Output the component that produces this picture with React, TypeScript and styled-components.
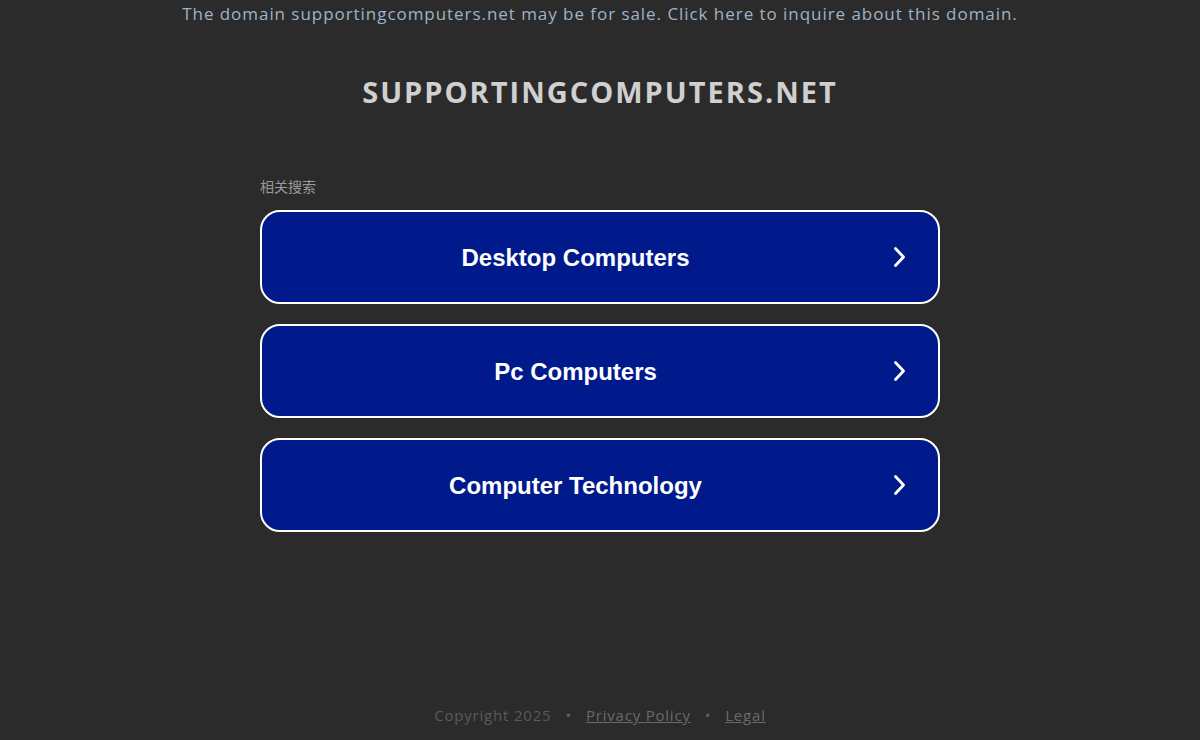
import styled, { createGlobalStyle } from "styled-components";

const GlobalStyle = createGlobalStyle`
  html, body {
    margin: 0;
    padding: 0;
    background: #2b2b2b;
  }
  body {
    font-family: "Open Sans", "Noto Sans", sans-serif;
  }
`;

const links = ["Desktop Computers", "Pc Computers", "Computer Technology"];

const Page = styled.div`
  height: 740px;
  display: flex;
  flex-direction: column;
  align-items: center;
  overflow: hidden;
`;

const Banner = styled.a`
  margin-top: 3px;
  font-size: 17px;
  line-height: 22px;
  color: #9fb3c8;
  text-decoration: none;
  letter-spacing: 0.95px;
`;

const Domain = styled.h1`
  margin: 49px 0 0;
  font-size: 29px;
  line-height: 36px;
  font-weight: 700;
  color: #d0d0d0;
  letter-spacing: 2px;
`;

const Related = styled.div`
  width: 680px;
  margin-top: 67px;
  display: flex;
  flex-direction: column;
`;

const Label = styled.div`
  font-family: "Noto Sans CJK SC", sans-serif;
  font-size: 14px;
  line-height: 18px;
  color: #9a9a9a;
  margin-bottom: 15px;
`;

const List = styled.div`
  display: flex;
  flex-direction: column;
  gap: 20px;
`;

const Item = styled.a`
  box-sizing: border-box;
  height: 94px;
  border: 2px solid #ffffff;
  border-radius: 20px;
  background: #011a8b;
  display: flex;
  align-items: center;
  padding: 0 30px 0 0;
  text-decoration: none;
`;

const ItemText = styled.span`
  flex: 1;
  text-align: center;
  font-family: "Liberation Sans", Arial, sans-serif;
  font-weight: 700;
  font-size: 24px;
  color: #ffffff;
  padding-top: 2px;
`;

const Chevron = styled.svg`
  width: 16px;
  height: 24px;
  margin-left: 3px;
`;

const Footer = styled.div`
  margin-top: auto;
  margin-bottom: 15px;
  display: flex;
  align-items: center;
  gap: 14px;
  font-size: 15px;
  line-height: 20px;
  letter-spacing: 0.8px;
  color: #5a5a5a;
`;

const FooterLink = styled.a`
  color: #6a6a6a;
  text-decoration: underline;
`;

const Dot = styled.span`
  color: #5f5f5f;
`;

export default function App() {
  return (
    <>
      <GlobalStyle />
      <Page>
        <Banner href="#">
          The domain supportingcomputers.net may be for sale. Click here to inquire about this domain.
        </Banner>
        <Domain>SUPPORTINGCOMPUTERS.NET</Domain>
        <Related>
          <Label>相关搜索</Label>
          <List>
            {links.map((l) => (
              <Item href="#" key={l}>
                <ItemText>{l}</ItemText>
                <Chevron viewBox="0 0 16 24">
                  <path
                    d="M3.5 3.5 L11.5 12 L3.5 20.5"
                    fill="none"
                    stroke="#fff"
                    strokeWidth="2.8"
                    strokeLinecap="round"
                    strokeLinejoin="round"
                  />
                </Chevron>
              </Item>
            ))}
          </List>
        </Related>
        <Footer>
          <span>Copyright 2025</span>
          <Dot>•</Dot>
          <FooterLink href="#">Privacy Policy</FooterLink>
          <Dot>•</Dot>
          <FooterLink href="#">Legal</FooterLink>
        </Footer>
      </Page>
    </>
  );
}
